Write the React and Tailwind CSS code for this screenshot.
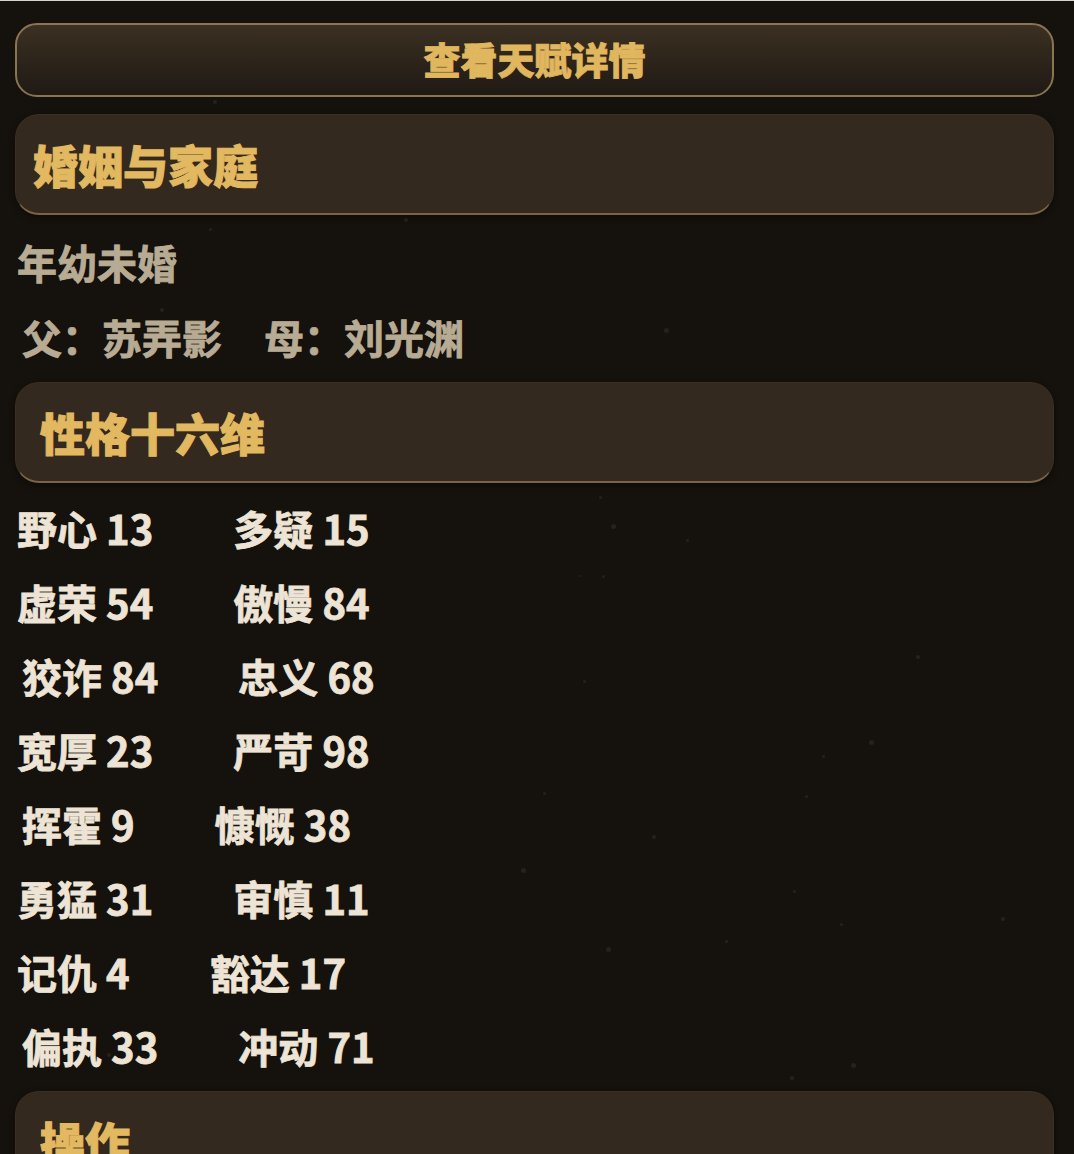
import React from 'react';

const traits = [
    [['野心', 13], ['多疑', 15], 0],
    [['虚荣', 54], ['傲慢', 84], 0],
    [['狡诈', 84], ['忠义', 68], 5],
    [['宽厚', 23], ['严苛', 98], 0],
    [['挥霍', 9], ['慷慨', 38], 5],
    [['勇猛', 31], ['审慎', 11], 0],
    [['记仇', 4], ['豁达', 17], 0],
    [['偏执', 33], ['冲动', 71], 5],
];

const dots = [
    [213, 100, 4], [404, 218, 4], [209, 228, 3], [160, 308, 4], [664, 328, 5], [599, 496, 3],
    [611, 524, 5], [686, 539, 3], [579, 575, 2], [602, 575, 3], [916, 655, 4], [583, 680, 3],
    [869, 740, 5], [822, 755, 3], [543, 792, 3], [805, 795, 3], [652, 835, 4], [793, 890, 3],
    [521, 868, 5], [851, 1063, 5], [1001, 917, 4], [840, 923, 3], [606, 947, 5], [725, 940, 3],
    [107, 1053, 4], [790, 1076, 4], [385, 1156, 4],
];

function SectionHeader({ title, inset = 'pl-[24px]' }) {
    return (
        <div className={`flex h-[101px] items-center rounded-[24px] border border-[#3a2f22] border-b-2 border-b-[#7a6445] bg-[#33291e] shadow-[0_2px_6px_rgba(0,0,0,0.4)] ${inset}`}>
            <h2 className="text-[45px] font-black leading-none text-[#e2b860] [-webkit-text-stroke:1px_#e2b860]">{title}</h2>
        </div>
    );
}

function TraitItem({ name, value }) {
    return (
        <span className="whitespace-nowrap">
            {name} {value}
        </span>
    );
}

export default function App() {
    return (
        <div
            className="relative min-h-[1154px] overflow-hidden bg-[#15110d]"
            style={{ fontFamily: '"Noto Sans CJK SC", "Noto Sans", sans-serif' }}
        >
            <div className="h-px bg-[#d6d2cc]" />

            {dots.map(([x, y, s], i) => (
                <span
                    key={i}
                    className="absolute rounded-full bg-[#3a322a] opacity-50"
                    style={{ left: x, top: y, width: s, height: s }}
                />
            ))}

            <div className="relative pl-[15px] pr-[20px] pt-[22px]">
                <button className="flex h-[74px] w-full items-center justify-center rounded-[22px] border-2 border-[#8a7454] bg-gradient-to-b from-[#3b3022] to-[#201a14] text-[37px] font-black text-[#e0b65e] [-webkit-text-stroke:0.8px_#e0b65e]">
                    查看天赋详情
                </button>

                <div className="mt-[17px]">
                    <SectionHeader title="婚姻与家庭" inset="pl-[17px]" />
                </div>

                <div className="mt-[9px] text-[40px] font-bold text-[#b8ab94] [-webkit-text-stroke:0.8px_#b8ab94]">
                    <div className="flex h-[75px] items-center pl-[2px]">年幼未婚</div>
                    <div className="flex h-[75px] items-center pl-[7px]">
                        <span>父：苏弄影</span>
                        <span className="ml-[42px]">母：刘光渊</span>
                    </div>
                </div>

                <div className="mt-[8px]">
                    <SectionHeader title="性格十六维" />
                </div>

                <div className="mt-[8px] text-[40px] font-bold text-[#ede4d5] [-webkit-text-stroke:0.8px_#ede4d5]">
                    {traits.map(([left, right, indent], i) => (
                        <div
                            key={i}
                            className={`flex h-[74px] items-center gap-[80px] ${indent ? 'pl-[7px]' : 'pl-[2px]'}`}
                        >
                            <TraitItem name={left[0]} value={left[1]} />
                            <TraitItem name={right[0]} value={right[1]} />
                        </div>
                    ))}
                </div>

                <div className="mt-[8px]">
                    <SectionHeader title="操作" />
                </div>
            </div>
        </div>
    );
}
